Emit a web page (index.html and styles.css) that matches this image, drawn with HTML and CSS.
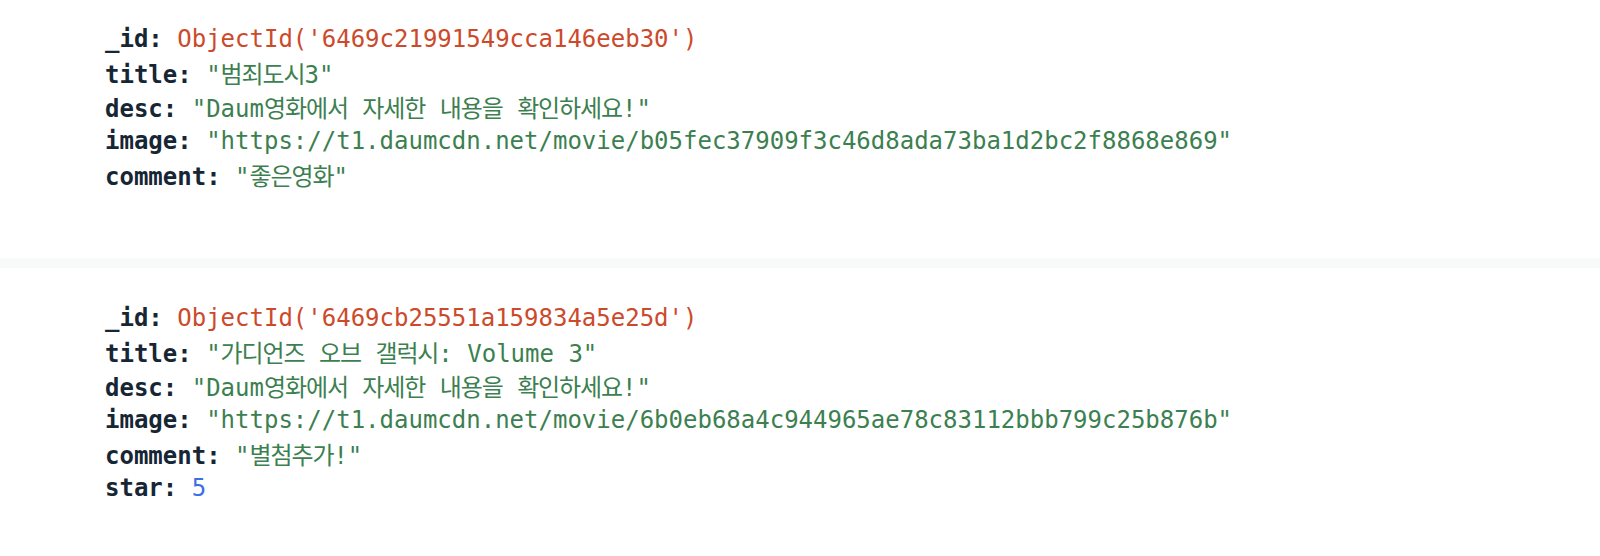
FILE: index.html
```html
<!DOCTYPE html>
<html lang="ko">
<head>
<meta charset="utf-8">
<title>Documents</title>
<link rel="stylesheet" href="styles.css">
</head>
<body>
<div class="list">
  <div class="doc doc-first">
    <div class="row"><span class="key">_id:</span> <span class="oid">ObjectId('6469c21991549cca146eeb30')</span></div>
    <div class="row"><span class="key">title:</span> <span class="str">"<span class="ko">범죄도시</span>3"</span></div>
    <div class="row"><span class="key">desc:</span> <span class="str">"Daum<span class="ko">영화에서</span> <span class="ko">자세한</span> <span class="ko">내용을</span> <span class="ko">확인하세요</span>!"</span></div>
    <div class="row"><span class="key">image:</span> <span class="str">"https://t1.daumcdn.net/movie/b05fec37909f3c46d8ada73ba1d2bc2f8868e869"</span></div>
    <div class="row"><span class="key">comment:</span> <span class="str">"<span class="ko">좋은영화</span>"</span></div>
  </div>
  <div class="divider"></div>
  <div class="doc doc-second">
    <div class="row"><span class="key">_id:</span> <span class="oid">ObjectId('6469cb25551a159834a5e25d')</span></div>
    <div class="row"><span class="key">title:</span> <span class="str">"<span class="ko">가디언즈</span> <span class="ko">오브</span> <span class="ko">갤럭시</span>: Volume 3"</span></div>
    <div class="row"><span class="key">desc:</span> <span class="str">"Daum<span class="ko">영화에서</span> <span class="ko">자세한</span> <span class="ko">내용을</span> <span class="ko">확인하세요</span>!"</span></div>
    <div class="row"><span class="key">image:</span> <span class="str">"https://t1.daumcdn.net/movie/6b0eb68a4c944965ae78c83112bbb799c25b876b"</span></div>
    <div class="row"><span class="key">comment:</span> <span class="str">"<span class="ko">별첨추가</span>!"</span></div>
    <div class="row"><span class="key">star:</span> <span class="num">5</span></div>
  </div>
</div>
</body>
</html>
```
FILE: styles.css
```css
html, body {
  margin: 0;
  padding: 0;
  background: #ffffff;
}

body {
  font-family: "DejaVu Sans Mono", "Liberation Mono", "Noto Sans CJK KR", monospace;
  font-size: 24px;
  color: #1c2d3a;
}

.list {
  display: flex;
  flex-direction: column;
}

.doc {
  display: flex;
  flex-direction: column;
  padding-left: 105px;
}

.doc-first {
  padding-top: 22px;
  padding-bottom: 66px;
}

.doc-second {
  padding-top: 33px;
  padding-bottom: 50px;
}

.divider {
  height: 10px;
  background: #f8faf9;
}

.row {
  height: 34px;
  line-height: 34px;
  white-space: pre;
}

.key {
  font-weight: bold;
  color: #162634;
}

.oid {
  color: #cc4a2c;
}

.str {
  color: #3c7f50;
}

.num {
  color: #3b6fe3;
}

.ko {
  font-family: "Noto Sans CJK KR", sans-serif;
  letter-spacing: -1.1px;
}
```
